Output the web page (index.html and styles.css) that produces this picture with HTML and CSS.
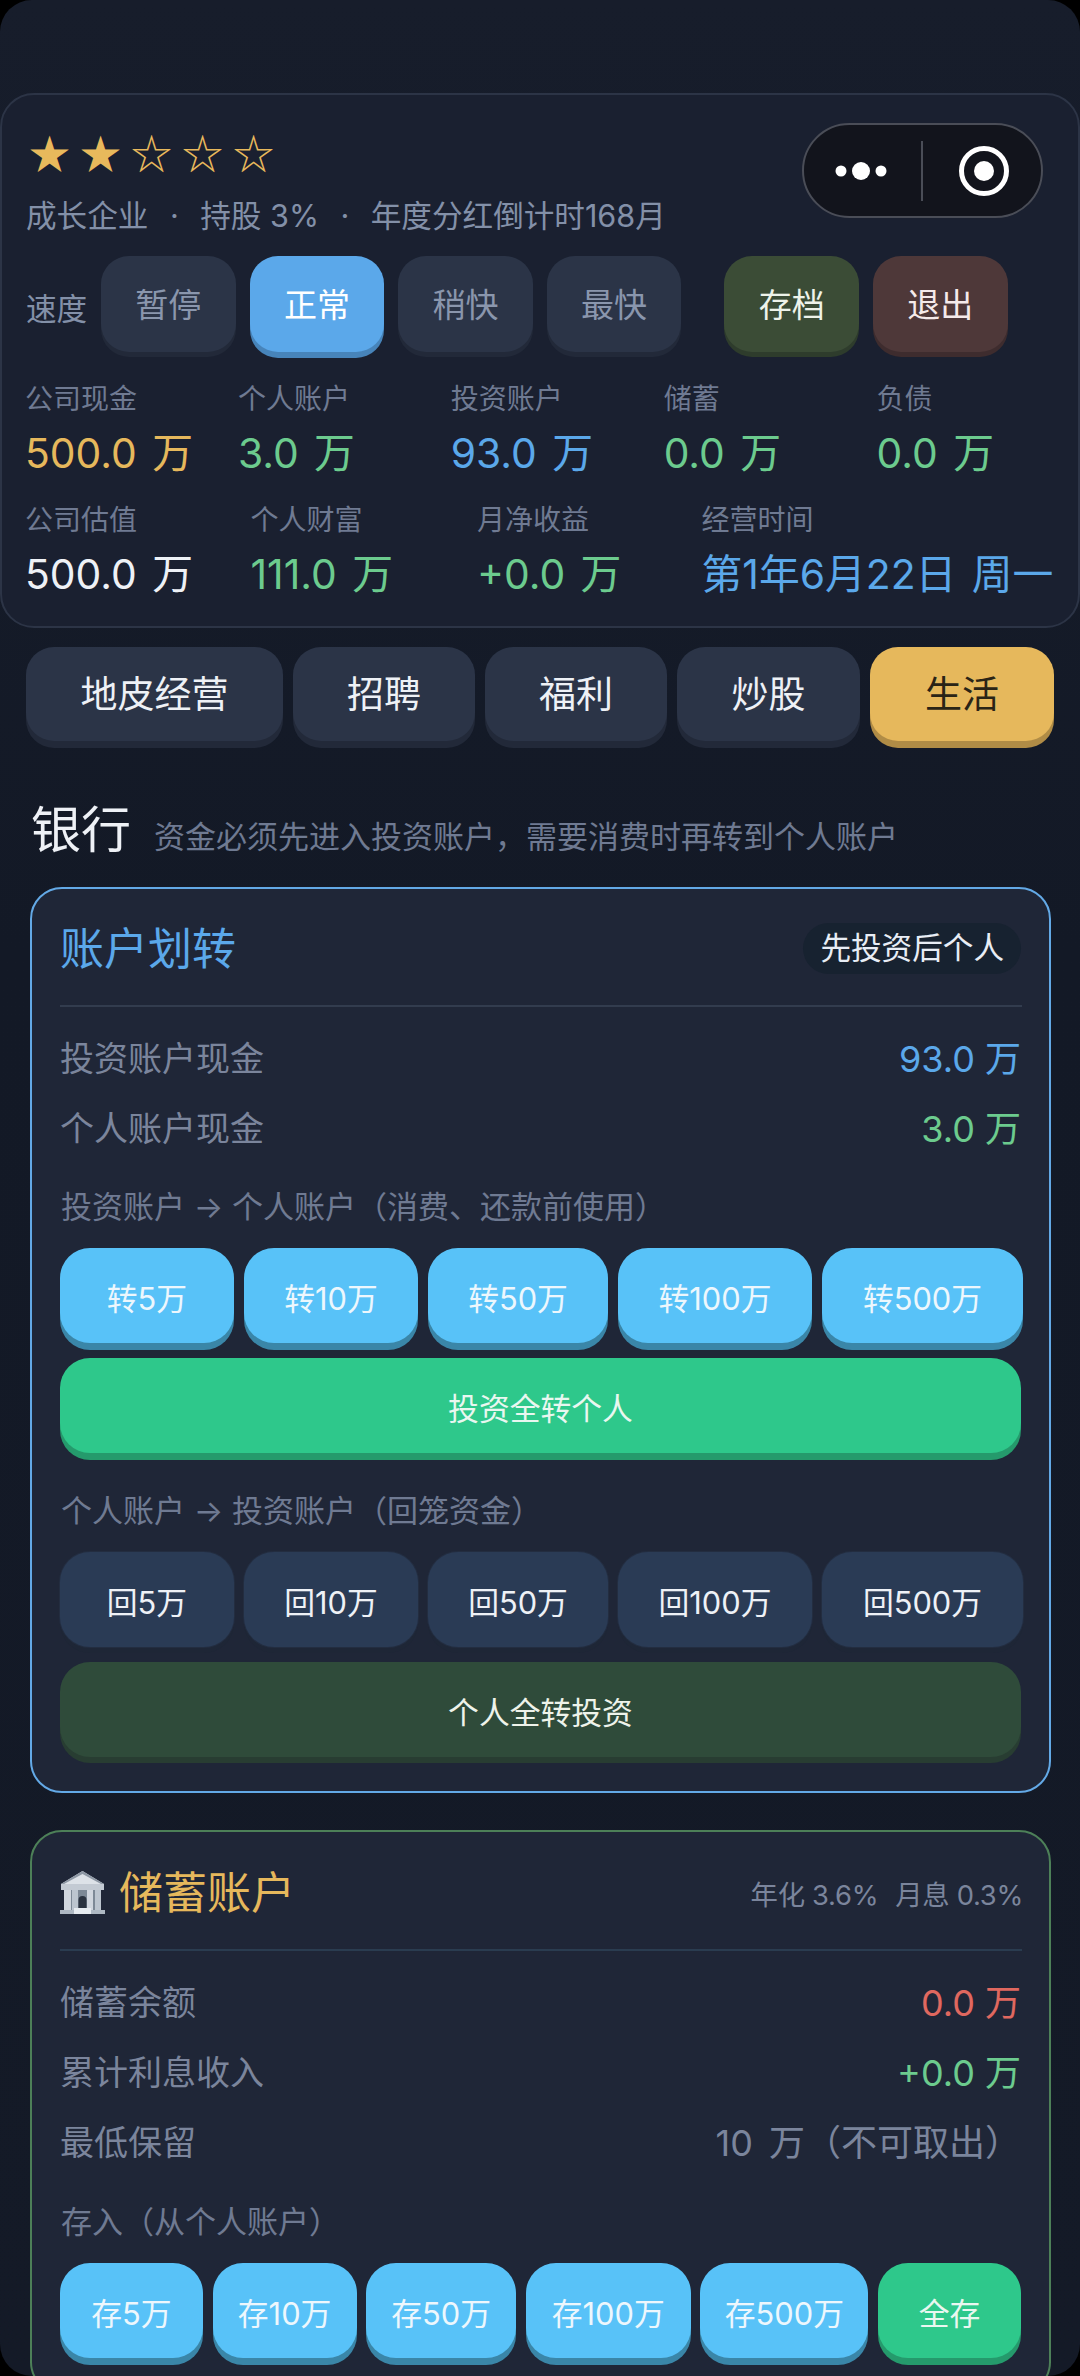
FILE: index.html
```html
<!DOCTYPE html>
<html lang="zh-CN">
<head>
<meta charset="utf-8">
<title>银行</title>
<link rel="stylesheet" href="styles.css">
</head>
<body>
<div class="app">
  <header class="panel">
    <div class="stars">★★☆☆☆</div>
    <div class="meta"><span>成长企业</span><span>·</span><span>持股 3%</span><span>·</span><span>年度分红倒计时168月</span></div>
    <div class="speed">
      <span class="speed-label">速度</span>
      <button class="sbtn">暂停</button>
      <button class="sbtn sbtn-on">正常</button>
      <button class="sbtn">稍快</button>
      <button class="sbtn">最快</button>
      <button class="sbtn sbtn-save">存档</button>
      <button class="sbtn sbtn-exit">退出</button>
    </div>
    <div class="stats stats-five">
      <div><div class="stat-label">公司现金</div><div class="stat-value gold">500.0 万</div></div>
      <div><div class="stat-label">个人账户</div><div class="stat-value green">3.0 万</div></div>
      <div><div class="stat-label">投资账户</div><div class="stat-value blue">93.0 万</div></div>
      <div><div class="stat-label">储蓄</div><div class="stat-value green">0.0 万</div></div>
      <div><div class="stat-label">负债</div><div class="stat-value green">0.0 万</div></div>
    </div>
    <div class="stats stats-four">
      <div><div class="stat-label">公司估值</div><div class="stat-value white">500.0 万</div></div>
      <div><div class="stat-label">个人财富</div><div class="stat-value green">111.0 万</div></div>
      <div><div class="stat-label">月净收益</div><div class="stat-value green">+0.0 万</div></div>
      <div><div class="stat-label">经营时间</div><div class="stat-value blue">第1年6月22日 周一</div></div>
    </div>
    <div class="capsule">
      <svg class="capsule-svg" viewBox="0 0 241 95" width="241" height="95">
        <circle cx="39" cy="48" r="5.5" fill="#fff"/>
        <circle cx="59" cy="48" r="9" fill="#fff"/>
        <circle cx="79" cy="48" r="5.5" fill="#fff"/>
        <rect x="119" y="18" width="2" height="60" fill="#4a4d57"/>
        <circle cx="182" cy="48" r="22.5" fill="none" stroke="#fff" stroke-width="5"/>
        <circle cx="182" cy="48" r="10" fill="#fff"/>
      </svg>
    </div>
  </header>

  <nav class="tabs">
    <button class="tab">地皮经营</button>
    <button class="tab">招聘</button>
    <button class="tab">福利</button>
    <button class="tab">炒股</button>
    <button class="tab tab-on">生活</button>
  </nav>

  <div class="section-head">
    <h1 class="section-title">银行</h1>
    <span class="section-sub">资金必须先进入投资账户，需要消费时再转到个人账户</span>
  </div>

  <section class="card card-blue">
    <div class="card-head">
      <h2 class="card-title blue">账户划转</h2>
      <span class="pill">先投资后个人</span>
    </div>
    <div class="rows">
      <div class="row"><span class="row-label">投资账户现金</span><span class="row-value blue">93.0 万</span></div>
      <div class="row"><span class="row-label">个人账户现金</span><span class="row-value green">3.0 万</span></div>
    </div>
    <div class="hint">投资账户 → 个人账户（消费、还款前使用）</div>
    <div class="btns">
      <button class="btn btn-sky">转5万</button>
      <button class="btn btn-sky">转10万</button>
      <button class="btn btn-sky">转50万</button>
      <button class="btn btn-sky">转100万</button>
      <button class="btn btn-sky">转500万</button>
    </div>
    <button class="full full-green">投资全转个人</button>
    <div class="hint hint-second">个人账户 → 投资账户（回笼资金）</div>
    <div class="btns">
      <button class="btn btn-navy">回5万</button>
      <button class="btn btn-navy">回10万</button>
      <button class="btn btn-navy">回50万</button>
      <button class="btn btn-navy">回100万</button>
      <button class="btn btn-navy">回500万</button>
    </div>
    <button class="full full-dark">个人全转投资</button>
  </section>

  <section class="card card-green">
    <div class="card-head card-head-green">
      <h2 class="card-title gold">
        <svg class="bank-icon" viewBox="0 0 45 44" width="45" height="44">
          <path d="M22.5 0 L44 13 L1 13 Z" fill="#dde2e8"/>
          <path d="M22.5 0 L44 13 L41 13 L22.5 3 L4 13 L1 13 Z" fill="#8d97a4"/>
          <rect x="1" y="13" width="43" height="6" fill="#c3cad3"/>
          <rect x="6" y="19" width="33" height="20" fill="#7d8996"/>
          <rect x="4" y="19" width="7" height="21" fill="#d0d6de"/>
          <rect x="12" y="19" width="6" height="21" fill="#bcc5cf"/>
          <rect x="27" y="19" width="6" height="21" fill="#d0d6de"/>
          <rect x="35" y="19" width="6" height="21" fill="#bcc5cf"/>
          <path d="M18.5 39 V29 a4 4 0 0 1 8 0 V39 Z" fill="#2b3340"/>
          <rect x="0" y="39" width="45" height="4" fill="#aeb8c3"/>
          <rect x="14" y="37" width="17" height="6" fill="#e6ebf0"/>
        </svg>储蓄账户
      </h2>
      <span class="rate">年化 3.6%<span class="rate-gap">月息 0.3%</span></span>
    </div>
    <div class="rows rows-green">
      <div class="row"><span class="row-label">储蓄余额</span><span class="row-value red">0.0 万</span></div>
      <div class="row"><span class="row-label">累计利息收入</span><span class="row-value green">+0.0 万</span></div>
      <div class="row"><span class="row-label">最低保留</span><span class="row-value muted">10 万（不可取出）</span></div>
    </div>
    <div class="hint hint-third">存入（从个人账户）</div>
    <div class="btns btns-six">
      <button class="btn btn-sky">存5万</button>
      <button class="btn btn-sky">存10万</button>
      <button class="btn btn-sky">存50万</button>
      <button class="btn btn-sky">存100万</button>
      <button class="btn btn-sky">存500万</button>
      <button class="btn btn-mint">全存</button>
    </div>
  </section>
</div>
</body>
</html>
```

FILE: styles.css
```css
* { box-sizing: border-box; margin: 0; padding: 0; }
html, body { width: 1080px; height: 2376px; overflow: hidden; background: #000; }
body, button { font-family: Inter, "Noto Sans CJK SC", sans-serif; font-weight: 400; }
button { border: 0; color: inherit; display: block; }

.app {
  width: 1080px; height: 2376px; overflow: hidden;
  border-radius: 32px;
  background: linear-gradient(#171d2b, #131926 40%, #141a27);
  padding-top: 93px;
  color: #eef1f6;
}

.panel {
  position: relative;
  height: 535px;
  background: #1a2030;
  border: 2px solid #2c3446;
  border-radius: 34px;
  padding: 39px 24px 0 24px;
}
.stars {
  height: 40px; line-height: 34px;
  font-family: "Noto Sans CJK SC", sans-serif;
  font-size: 41px; letter-spacing: 10px; color: #e8b95c; margin-left: 3px;
  white-space: nowrap;
}
.meta {
  display: flex; gap: 21.5px;
  height: 40px; line-height: 40px; margin-top: 22px;
  font-size: 30.6px; color: #8390a8;
}
.speed { display: flex; align-items: center; gap: 14px; margin-top: 20px; height: 96px; }
.speed-label { font-size: 30.6px; color: #8390a8; width: 61px; padding-top: 5px; white-space: nowrap; }
.sbtn {
  width: 134.6px; height: 96px; border-radius: 28px; padding-bottom: 2px;
  font-size: 33px;
  background: #2b3447; color: #8a96ad;
  box-shadow: 0 5px 0 #222939;
}
.sbtn-on { background: #5ba8ea; color: #fff; box-shadow: 0 6px 0 #4784ba; }
.sbtn-save { margin-left: 29px; background: #3b4c36; color: #eef3ea; box-shadow: 0 5px 0 #2e3c2c; }
.sbtn-exit { background: #4e3839; color: #f5eaea; box-shadow: 0 5px 0 #3e2c2e; }

.stats { display: grid; margin-left: -1px; }
.stats-five { grid-template-columns: repeat(5, 212.9px); margin-top: 29px; }
.stats-four { grid-template-columns: 225.5px 226.5px 224.5px auto; margin-top: 23px; }
.stat-label { height: 36px; line-height: 36px; font-size: 28px; color: #6f7a92; }
.stat-value { height: 52px; line-height: 52px; font-size: 40.8px; word-spacing: 4px; margin-top: 10px; white-space: nowrap; }
.gold { color: #e6b85c; }
.green { color: #6ccb8e; }
.blue { color: #5ba8ea; }
.white { color: #eef1f6; }
.red { color: #e0685f; }
.muted { color: #7b859c; word-spacing: 6px; }

.capsule {
  position: absolute; left: 800px; top: 28px;
  width: 241px; height: 95px; border-radius: 48px;
  background: #12141c; border: 2px solid #4a4d57;
}
.capsule-svg { display: block; margin: -2px; }

.tabs { display: grid; grid-template-columns: 257px 182px 182px 183px 184px; gap: 10px; padding: 0 26px; margin-top: 19px; }
.tab {
  height: 94px; border-radius: 28px; padding-bottom: 4px;
  font-size: 37px; background: #2b3447; color: #eef1f6;
  box-shadow: 0 7px 0 #222939;
}
.tab-on { background: #e6b85c; color: #2a2416; box-shadow: 0 7px 0 #b08c46; }

.section-head { display: flex; align-items: baseline; gap: 23px; padding-left: 31px; margin-top: 59px; height: 59px; line-height: 60px; }
.section-title { font-size: 50px; font-weight: 400; color: #eef1f6; }
.section-sub { font-size: 31px; color: #6f7a92; }

.card { margin: 28px 29px 0 30px; border-radius: 32px; background: #1f2637; padding: 34px 28px; border: 2px solid #63a9e6; }
.card-green { margin-top: 37px; border-color: #4d8058; padding-top: 35px; }
.card-head {
  display: flex; justify-content: space-between; align-items: center;
  height: 84px; padding-bottom: 31px; border-bottom: 2px solid #323c4e;
  margin-right: -1px;
}
.card-head-green { border-bottom-color: #2a3c50; }
.card-title { display: flex; align-items: center; gap: 14px; font-size: 44px; font-weight: 400; line-height: 52px; }
.bank-icon { display: block; }
.pill { height: 51px; line-height: 50px; padding: 0 17px; margin-right: 1px; border-radius: 26px; background: #172230; font-size: 30.6px; color: #e8edf5; }
.rate { font-size: 27.36px; letter-spacing: -0.3px; color: #7b859c; margin-right: -1px; }
.rate-gap { margin-left: 17px; }

.rows { display: flex; flex-direction: column; gap: 20px; margin-top: 27px; }
.row { display: flex; justify-content: space-between; height: 50px; line-height: 50px; padding-right: 0; }
.row-label { font-size: 34px; color: #7b859c; }
.row-value { font-size: 36px; }

.hint { height: 40px; line-height: 40px; font-size: 31px; color: #6f7a92; margin-top: 33px; margin-left: 1px; }
.hint-second { margin-top: 38px; }
.hint-third { margin-top: 34px; }

.btns { display: grid; grid-template-columns: 174px 174px 180px 194px 201px; gap: 10px; margin-top: 21px; }
.btns-six { grid-template-columns: 143px 144px 150px 165px 168px 143px; gap: 9.6px; }
.btn { height: 95px; border-radius: 30px; padding-top: 2px; font-size: 30.8px; white-space: nowrap; }
.btn-sky { background: #58c2f8; color: #edf7fd; box-shadow: 0 7px 0 #3a86a8; }
.btn-mint { background: #2ec88b; color: #e9f7f0; box-shadow: 0 7px 0 #259a6c; }
.btn-navy { background: #2a3b55; color: #eef1f6; box-shadow: 0 0 0 1px #232d40, 0 6px 0 #1e2636; }

.full { width: 100%; height: 95px; border-radius: 30px; margin-top: 15px; padding-top: 2px; font-size: 30.8px; }
.full-green { background: #2ec88b; color: #e9f7f0; box-shadow: 0 7px 0 #259a6c; }
.full-dark { background: #2f4b3a; color: #eef3ea; box-shadow: 0 6px 0 #283d32; }
```
